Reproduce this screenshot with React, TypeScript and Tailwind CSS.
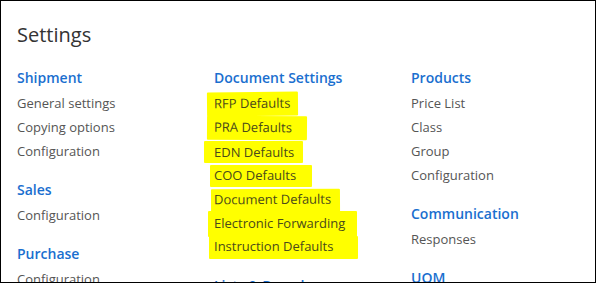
import React from 'react';

interface Item {
  label: string;
  mark?: string;
}

interface Section {
  title: string;
  items: Item[];
}

const columns: Section[][] = [
  [
    { title: 'Shipment', items: [{ label: 'General settings' }, { label: 'Copying options' }, { label: 'Configuration' }] },
    { title: 'Sales', items: [{ label: 'Configuration' }] },
    { title: 'Purchase', items: [{ label: 'Configuration' }] },
  ],
  [
    {
      title: 'Document Settings',
      items: [
        { label: 'RFP Defaults', mark: '-ml-[7px] pl-[7px] pr-[8px] pt-[2px] pb-[2px] -rotate-[0.5deg]' },
        { label: 'PRA Defaults', mark: '-ml-[7px] pl-[7px] pr-[15px] pt-[2px] pb-[2px] rotate-[0.4deg]' },
        { label: 'EDN Defaults', mark: '-ml-[10px] pl-[10px] pr-[9px] pt-[2px] pb-[1px]' },
        { label: 'COO Defaults', mark: '-ml-[4px] pl-[4px] pr-[16px] pt-[1px] pb-[2px]' },
        { label: 'Document Defaults', mark: '-ml-[3px] pl-[3px] pr-[9px] pt-[1px] pb-[2px] -rotate-[0.3deg]' },
        { label: 'Electronic Forwarding', mark: '-ml-[6px] pl-[6px] pr-[12px] pt-[3px] pb-[3px]' },
        { label: 'Instruction Defaults', mark: '-ml-[5px] pl-[5px] pr-[25px] pt-[1px] pb-[3px] -mt-[1px]' },
      ],
    },
    { title: 'Lists & Dropdowns', items: [] },
  ],
  [
    { title: 'Products', items: [{ label: 'Price List' }, { label: 'Class' }, { label: 'Group' }, { label: 'Configuration' }] },
    { title: 'Communication', items: [{ label: 'Responses' }] },
    { title: 'UOM', items: [] },
  ],
];

const SectionBlock: React.FC<{ section: Section }> = ({ section }) => (
  <div className="mb-4">
    <div className="text-[14px] leading-[20px] font-semibold text-[#1a6fcf] mb-1 whitespace-nowrap">{section.title}</div>
    {section.items.map((item, i) => (
      <div key={i} className="h-[24px] flex items-center text-[13px] text-[#555555] whitespace-nowrap">
        {item.mark ? (
          <span className={`bg-[#ffff00] text-[#4a4a1a] rounded-[1px] ${item.mark}`}>{item.label}</span>
        ) : (
          <span>{item.label}</span>
        )}
      </div>
    ))}
  </div>
);

export default function App() {
  return (
    <div className="w-[596px] h-[283px] bg-white border border-black overflow-hidden" style={{ fontFamily: '"Open Sans", "Noto Sans", sans-serif' }}>
      <div className="pt-[20px] pl-4">
        <h1 className="text-[20px] leading-[28px] text-[#333333] font-normal mb-[19px]">Settings</h1>
        <div className="grid grid-cols-[197px_197px_197px]">
          {columns.map((col, ci) => (
            <div key={ci} className="flex flex-col">
              {col.map((s) => (
                <SectionBlock key={s.title} section={s} />
              ))}
            </div>
          ))}
        </div>
      </div>
    </div>
  );
}
